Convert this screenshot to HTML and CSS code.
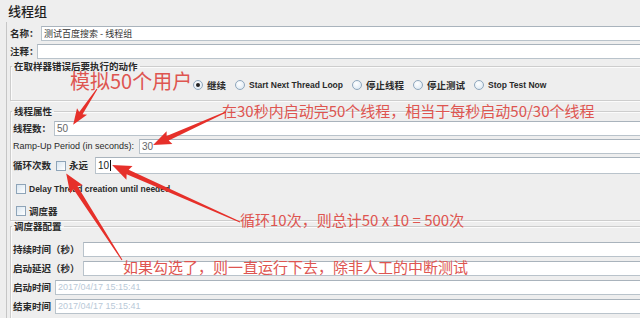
FILE: index.html
```html
<!DOCTYPE html>
<html lang="zh-CN">
<head>
<meta charset="utf-8">
<title>线程组</title>
<link rel="stylesheet" href="styles.css">
</head>
<body>
<div class="page">
  <h1 class="title">线程组</h1>
  <div class="panel">
    <div class="row r-name"><span class="lbl w-name">名称：</span><div class="field txt">测试百度搜索 - 线程组</div></div>
    <div class="row r-comment"><span class="lbl w-comment">注释：</span><div class="field"></div></div>

    <fieldset class="group g-action">
      <legend>在取样器错误后要执行的动作</legend>
      <div class="radios">
        <span class="opt"><span class="radio on"></span><span class="cjk">继续</span></span>
        <span class="opt"><span class="radio"></span><span class="en">Start Next Thread Loop</span></span>
        <span class="opt"><span class="radio"></span><span class="cjk">停止线程</span></span>
        <span class="opt"><span class="radio"></span><span class="cjk">停止测试</span></span>
        <span class="opt"><span class="radio"></span><span class="en">Stop Test Now</span></span>
      </div>
    </fieldset>

    <fieldset class="group g-thread">
      <legend>线程属性</legend>
      <div class="row"><span class="lbl w-threads">线程数：</span><div class="field val">50</div></div>
      <div class="row"><span class="lbl en-lbl">Ramp-Up Period (in seconds):</span><div class="field val">30</div></div>
      <div class="row r-loop"><span class="lbl w-threads">循环次数</span><span class="check"></span><span class="lbl forever">永远</span><div class="field val dark">10<span class="caret"></span></div></div>
      <div class="crow"><span class="check"></span><span class="en">Delay Thread creation until needed</span></div>
      <div class="crow"><span class="check"></span><span class="cjk">调度器</span></div>
    </fieldset>

    <fieldset class="group g-sched">
      <legend>调度器配置</legend>
      <div class="row"><span class="lbl w-long">持续时间（秒）</span><div class="field"></div></div>
      <div class="row"><span class="lbl w-long">启动延迟（秒）</span><div class="field"></div></div>
      <div class="row"><span class="lbl w-short">启动时间</span><div class="field ph">2017/04/17 15:15:41</div></div>
      <div class="row"><span class="lbl w-short">结束时间</span><div class="field ph">2017/04/17 15:15:41</div></div>
    </fieldset>
  </div>

  <div class="note n-users">模拟50个用户</div>
  <div class="note n-ramp">在30秒内启动完50个线程，相当于每秒启动50/30个线程</div>
  <div class="note n-loop">循环10次，则总计50 x 10 = 500次</div>
  <div class="note n-forever">如果勾选了，则一直运行下去，除非人工的中断测试</div>

  <svg class="arrows" width="640" height="318" viewBox="0 0 640 318" aria-hidden="true">
    <g fill="#e6302a">
      <polygon transform="translate(97,89) rotate(123.7)" points="0,-0.5 29,-2 27,-6 43,0 27,6 29,2 0,0.5"/>
      <polygon transform="translate(226,112) rotate(155.7)" points="0,-0.5 64,-2.5 62,-7 80,0 62,7 64,2.5 0,0.5"/>
      <polygon transform="translate(240,222) rotate(204)" points="0,-0.5 123,-2.5 121,-7.5 140,0 121,7.5 123,2.5 0,0.5"/>
      <polygon transform="translate(122,260) rotate(237.2)" points="0,-0.5 86,-2.5 84,-7.5 103,0 84,7.5 86,2.5 0,0.5"/>
    </g>
  </svg>
</div>
</body>
</html>
```
FILE: styles.css
```css
html, body {
  margin: 0;
  padding: 0;
  overflow: hidden;
}
body {
  width: 640px;
  height: 318px;
  background: #eeeeee;
  font-family: "Liberation Sans", "Noto Sans CJK SC", sans-serif;
  color: #222;
}
.page {
  position: relative;
  width: 660px;
  height: 318px;
}
.title {
  margin: 0;
  height: 22px;
  padding: 1px 0 0 8px;
  box-sizing: border-box;
  font: 500 13px/20px "Noto Sans CJK SC", sans-serif;
  color: #1e1e1e;
}
.panel {
  margin-left: 6px;
  border-left: 1px solid #c6c6c6;
  padding: 4px 0 0 3px;
  height: 296px;
  box-sizing: border-box;
}
.row {
  display: flex;
  align-items: center;
  height: 15px;
  margin-bottom: 3px;
}
.lbl {
  font: bold 9.5px/15px "Noto Sans CJK SC", sans-serif;
  color: #2a2a2a;
  white-space: nowrap;
  flex: none;
}
.w-name { width: 31px; }
.w-comment { width: 27px; }
.w-threads { width: 41px; padding-left: 2px; }
.w-long { width: 70px; padding-left: 2px; }
.w-short { width: 42px; padding-left: 2px; }
.en-lbl {
  font: 9px/15px "Liberation Sans", sans-serif;
  color: #2a2a2a;
  width: 126px;
  padding-left: 2px;
}
.field {
  flex: 1;
  height: 15px;
  box-sizing: border-box;
  background: #fff;
  border: 1px solid #b9c3cb;
  border-top-color: #a9b3bc;
  padding-left: 2px;
  font: 9px/13px "Noto Sans CJK SC", sans-serif;
  color: #333;
  white-space: nowrap;
  overflow: hidden;
}
.field.val {
  font: 10px/13px "Liberation Sans", sans-serif;
  color: #666;
}
.field.val.dark { color: #222; }
.field.ph {
  font: 9px/13px "Liberation Sans", sans-serif;
  color: #b9c9d8;
}
.caret {
  display: inline-block;
  width: 1px;
  height: 11px;
  background: #111;
  vertical-align: -2px;
  margin-left: 1px;
}
.r-comment { margin-bottom: 0; }

.group {
  margin: 0;
  padding: 0;
  min-width: 0;
  border: 1px solid #cdcdcd;
  box-shadow: inset 1px 1px 0 #fbfbfb, 1px 1px 0 #fbfbfb;
}
.group legend {
  margin-left: 1px;
  padding: 0 2px;
  font: bold 9.5px/12px "Noto Sans CJK SC", sans-serif;
  color: #2a2a2a;
}
.g-action {
  margin-top: 1px;
  padding: 6px 0 8px 0;
}
.radios {
  display: flex;
  align-items: center;
  height: 14px;
  padding-left: 182px;
}
.opt {
  display: flex;
  align-items: center;
  gap: 4px;
  margin-right: 9px;
}
.radio {
  width: 8px;
  height: 8px;
  border-radius: 50%;
  border: 1px solid #8fa7bd;
  background: radial-gradient(circle at 40% 35%, #ffffff, #d6e4f0);
  position: relative;
  flex: none;
}
.radio.on::after {
  content: "";
  position: absolute;
  left: 2px;
  top: 2px;
  width: 4px;
  height: 4px;
  border-radius: 50%;
  background: #222;
}
.cjk {
  font: bold 9.5px/14px "Noto Sans CJK SC", sans-serif;
  color: #2a2a2a;
}
.en {
  font: bold 8.5px/14px "Liberation Sans", sans-serif;
  color: #2a2a2a;
}
.g-thread {
  margin-top: 4px;
  padding: 4px 0 2px 0;
}
.r-loop {
  height: 17px;
  margin-top: 2px;
}
.r-loop .field { height: 17px; line-height: 15px; }
.r-loop .w-threads { width: 43px; }
.check {
  width: 8px;
  height: 8px;
  border: 1px solid #8ea4b8;
  background: linear-gradient(135deg, #d9e6f1, #ffffff);
  flex: none;
}
.r-loop .check { margin-right: 3px; }
.forever { margin-right: 7px; }
.crow {
  display: flex;
  align-items: center;
  gap: 3px;
  height: 14px;
  padding-left: 5px;
  margin-top: 8px;
}
.g-sched {
  margin-top: -1px;
  padding: 10px 0 0 0;
}
.g-sched .row { margin-bottom: 4px; }

.note {
  position: absolute;
  white-space: nowrap;
  font-family: "Noto Sans CJK SC", sans-serif;
  font-weight: 400;
  color: #de5550;
}
.n-users {
  left: 70px;
  top: 68px;
  font-size: 20px;
  line-height: 26px;
}
.n-ramp {
  left: 222px;
  top: 102px;
  font-size: 15px;
  line-height: 18px;
}
.n-loop {
  left: 240px;
  top: 211px;
  font-size: 15px;
  line-height: 18px;
}
.n-forever {
  left: 123px;
  top: 258px;
  font-size: 15px;
  line-height: 18px;
}
.arrows {
  position: absolute;
  left: 0;
  top: 0;
  pointer-events: none;
}
```
